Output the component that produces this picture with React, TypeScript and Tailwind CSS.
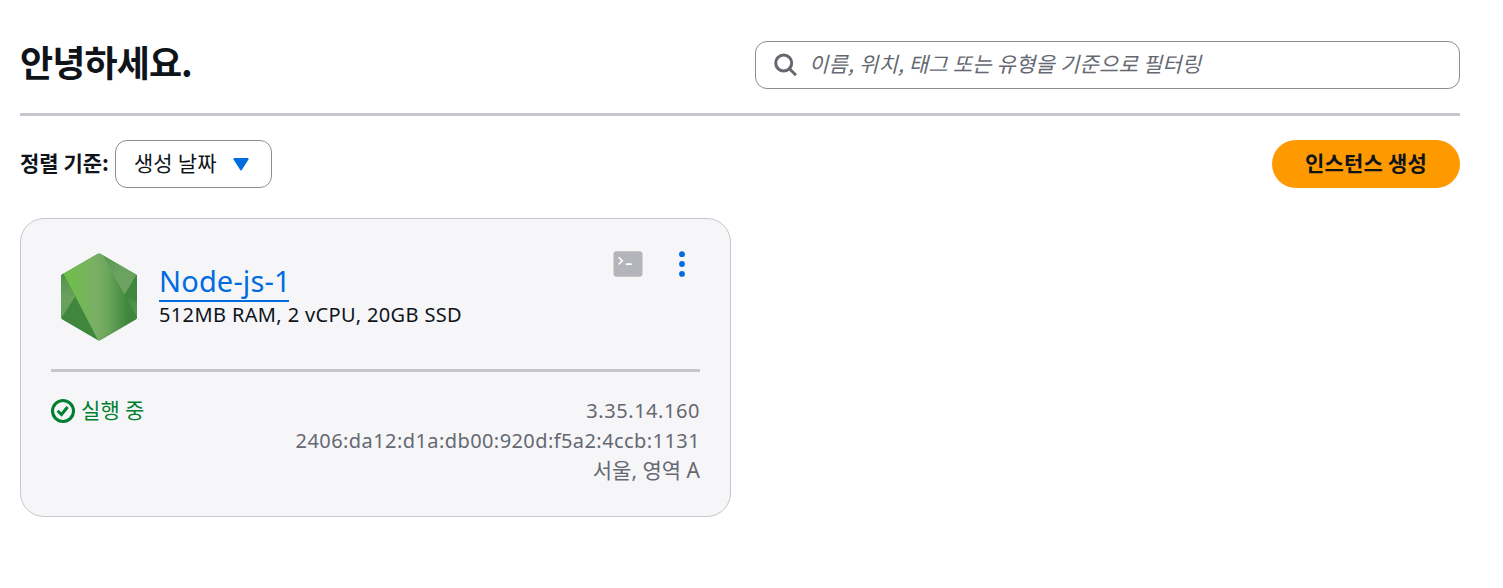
import React from "react";

function SearchIcon() {
  return (
    <svg width="24" height="24" viewBox="0 0 24 24" fill="none" stroke="#656871" strokeWidth="3">
      <circle cx="9.700" cy="10" r="8" />
      <path d="M15.200 15.500L22 22.300" />
    </svg>
  );
}

function NodeLogo() {
  return (
    <svg width="78" height="90" viewBox="60 252 78 90">
      <defs>
        <linearGradient id="band" x1="62" x2="137" y1="0" y2="0" gradientUnits="userSpaceOnUse">
          <stop offset="0.06" stopColor="#6cbf46" />
          <stop offset="0.2" stopColor="#73b955" />
          <stop offset="0.45" stopColor="#79af65" />
          <stop offset="0.6" stopColor="#6ea65d" />
          <stop offset="0.87" stopColor="#3f873d" />
          <stop offset="1" stopColor="#3f873d" />
        </linearGradient>
        <linearGradient id="corner" x1="104" x2="137" y1="257" y2="290" gradientUnits="userSpaceOnUse">
          <stop offset="0" stopColor="#579552" />
          <stop offset="0.45" stopColor="#6ba260" />
          <stop offset="1" stopColor="#6ba260" />
        </linearGradient>
        <linearGradient id="side" x1="0" x2="0" y1="275" y2="318" gradientUnits="userSpaceOnUse">
          <stop offset="0" stopColor="#55914f" />
          <stop offset="0.6" stopColor="#6ba35e" />
          <stop offset="1" stopColor="#639e58" />
        </linearGradient>
        <linearGradient id="sliver" x1="124" x2="137" y1="295" y2="316" gradientUnits="userSpaceOnUse">
          <stop offset="0" stopColor="#3f873d" />
          <stop offset="1" stopColor="#5a9654" />
        </linearGradient>
        <clipPath id="hexagon">
          <path d="M97.5 253.9Q99 253 100.500 253.900L136 274.400Q137 275 137 276.500V317Q137 318.500 136 319.200L100.500 340.100Q99 341 97.500 340.100L62 319.200Q61 318.500 61 317V276.500Q61 275 62 274.400Z" />
        </clipPath>
      </defs>
      <g clipPath="url(#hexagon)">
        <path d="M60 252H138V342H60Z" fill="#3f873d" />
        <path d="M60 272L64 273L75.500 296L60 320Z" fill="url(#side)" />
        <path d="M99 252L138 273L124.500 295Z" fill="url(#corner)" />
        <path d="M138 272L124.500 295L138 318Z" fill="#3f873d" />
        <path d="M124.500 295L138 302V319Z" fill="url(#sliver)" />
        <path d="M63.500 273.500L101 251.500L124.500 295L138 319L99 342Z" fill="url(#band)" />
      </g>
    </svg>
  );
}

function TerminalIcon() {
  return (
    <svg width="30" height="26" viewBox="0 0 30 26" fill="none">
      <rect x="0.500" y="0.300" width="29" height="25.400" rx="3" fill="#b4b4bb" />
      <path d="M5.700 6.200L9.300 9.800L5.700 13.400M12.800 13.100H18.800" stroke="#fff" strokeWidth="1.600" />
    </svg>
  );
}

function StatusIcon() {
  return (
    <svg width="24" height="24" viewBox="0 0 24 24" fill="none" stroke="#00802f" strokeWidth="3">
      <circle cx="12" cy="12" r="10.500" />
      <path d="M6.600 11.700L10.500 15.500L16.600 8" />
    </svg>
  );
}

export default function App() {
  return (
    <main className="h-[588px] w-[1503px] overflow-hidden bg-white pt-[41px] pr-[43px] pl-5 font-['Noto_Sans','Noto_Sans_CJK_KR',sans-serif] text-[#0f141a]">
      <header className="flex h-[75px] items-start justify-between border-b-3 border-[#c6c6cd]">
        <h1 className="-mt-[2px] font-['Noto_Sans_CJK_KR',sans-serif] text-[36px] leading-[44px] font-bold tracking-[-0.9px]">안녕하세요.</h1>
        <label className="flex h-12 w-[705px] items-center rounded-xl border border-[#8c8c94] pl-[18px] font-['Noto_Sans_CJK_KR',sans-serif]">
          <SearchIcon />
          <input
            className="mb-[4px] ml-[11px] h-[30px] w-[600px] text-[21px] leading-[30px] tracking-[0.18px] italic outline-none placeholder:text-[#656871]"
            placeholder="이름, 위치, 태그 또는 유형을 기준으로 필터링"
          />
        </label>
      </header>

      <div className="mt-6 flex h-12 items-center justify-between font-['Noto_Sans_CJK_KR',sans-serif]">
        <div className="flex items-center gap-[6px]">
          <span className="pb-[4px] text-[21px] leading-[30px] font-bold">정렬 기준:</span>
          <button className="flex h-12 w-[157px] items-center rounded-xl border border-[#8c8c94] pl-[18px] text-[21px]">
            <span className="pb-[3px] tracking-[0.15px]">생성 날짜</span>
            <svg className="ml-4" width="16" height="13" viewBox="0 0 16 13">
              <path d="M1.300 1H14.700L8 11.500Z" fill="#006ce0" stroke="#006ce0" strokeWidth="1.800" strokeLinejoin="round" />
            </svg>
          </button>
        </div>
        <button className="h-12 w-[188px] rounded-full bg-[#ff9900] pb-[3px] text-[21px] font-bold tracking-[0.2px]">인스턴스 생성</button>
      </div>

      <section className="mt-[30px] h-[299px] w-[711px] rounded-3xl border border-[#c6c6cd] bg-[#f6f6f9] px-[30px]">
        <div className="flex h-[153px] items-start border-b-3 border-[#c6c6cd] pt-[32px]">
          <div className="ml-[9px] pt-px">
            <NodeLogo />
          </div>
          <div className="ml-[21px] pt-[11px]">
            <a className="block h-10 w-[130px] border-b-2 border-[#006ce0] text-[29px] leading-[38px] tracking-[0.15px] whitespace-nowrap text-[#006ce0]">Node-js-1</a>
            <p className="text-[20px] leading-[26px] tracking-[0.37px] whitespace-nowrap">512MB RAM, 2 vCPU, 20GB SSD</p>
          </div>
          <div className="mr-[14px] ml-auto flex items-center gap-[35px]">
            <TerminalIcon />
            <svg width="8" height="26" viewBox="0 0 8 26" fill="#006ce0">
              <circle cx="4" cy="3.200" r="2.900" />
              <circle cx="4" cy="13" r="2.900" />
              <circle cx="4" cy="22.900" r="2.900" />
            </svg>
          </div>
        </div>
        <div className="flex justify-between pt-6 text-[21px] leading-[30px]">
          <div className="flex h-[30px] items-center gap-[6px] text-[#00802f]">
            <StatusIcon />
            <span className="pb-[4px] font-['Noto_Sans_CJK_KR',sans-serif] tracking-[0.2px]">실행 중</span>
          </div>
          <div className="text-right text-[20px] text-[#656871]">
            <p className="tracking-[0.55px]">3.35.14.160</p>
            <p className="tracking-[0.42px]">2406:da12:d1a:db00:920d:f5a2:4ccb:1131</p>
            <p className="-mt-px text-[21px]">서울, 영역 A</p>
          </div>
        </div>
      </section>
    </main>
  );
}
